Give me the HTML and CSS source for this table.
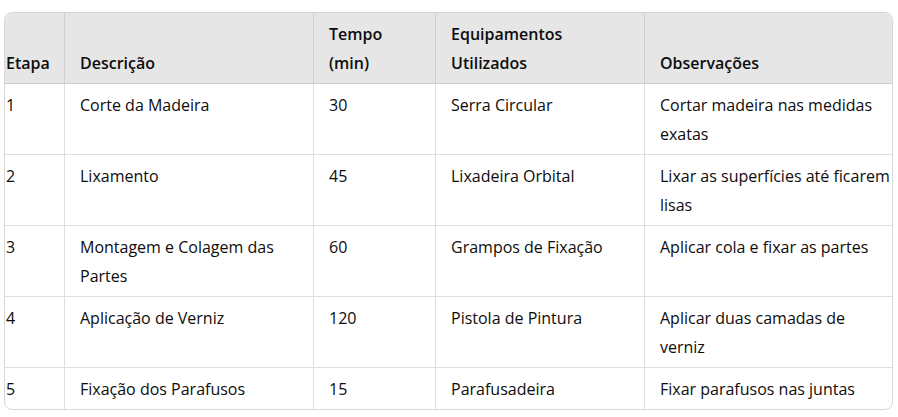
FILE: index.html
```html
<!DOCTYPE html>
<html lang="pt">
<head>
<meta charset="utf-8">
<link rel="stylesheet" href="styles.css">
</head>
<body>
<div class="wrap">
<table class="tbl">
<colgroup>
<col class="c1"><col class="c2"><col class="c3"><col class="c4"><col class="c5">
</colgroup>
<thead>
<tr><th>Etapa</th><th>Descrição</th><th>Tempo (min)</th><th>Equipamentos Utilizados</th><th>Observações</th></tr>
</thead>
<tbody>
<tr><td>1</td><td>Corte da Madeira</td><td>30</td><td>Serra Circular</td><td>Cortar madeira nas medidas exatas</td></tr>
<tr><td>2</td><td>Lixamento</td><td>45</td><td>Lixadeira Orbital</td><td>Lixar as superfícies até ficarem lisas</td></tr>
<tr><td>3</td><td>Montagem e Colagem das Partes</td><td>60</td><td>Grampos de Fixação</td><td>Aplicar cola e fixar as partes</td></tr>
<tr><td>4</td><td>Aplicação de Verniz</td><td>120</td><td>Pistola de Pintura</td><td>Aplicar duas camadas de verniz</td></tr>
<tr><td>5</td><td>Fixação dos Parafusos</td><td>15</td><td>Parafusadeira</td><td>Fixar parafusos nas juntas</td></tr>
</tbody>
</table>
</div>
</body>
</html>
```
FILE: styles.css
```css
html, body { margin: 0; padding: 0; background: #ffffff; }
body { padding: 12px 5px 0 4px; font-family: "Open Sans", "Noto Sans", sans-serif; color: #0d0d0d; }
.wrap {
  width: 889px;
  border: 1px solid #d6d6d6;
  border-radius: 8px;
  overflow: hidden;
  box-sizing: border-box;
}
.tbl {
  border-collapse: collapse;
  table-layout: fixed;
  width: 889px;
  font-size: 16px;
  line-height: 29px;
  margin: -1px 0 0 -1px;
}
.c1 { width: 60px; }
.c2 { width: 249px; }
.c3 { width: 122px; }
.c4 { width: 209px; }
.c5 { width: 249px; }
.tbl th, .tbl td {
  padding: 7px 15px 5px 15px;
  text-align: left;
  border: 1px solid #dedede;
  vertical-align: top;
}
.tbl th {
  background: #e6e6e6;
  font-weight: 600;
  vertical-align: bottom;
  border-bottom-color: #cccccc;
  border-right-color: #d0d0d0;
}
.tbl th:first-child, .tbl td:first-child { padding-left: 1px; }
.tbl th:last-child, .tbl td:last-child { padding-right: 0; }
.tbl tr > :last-child { border-right: none; }
.tbl tbody tr:last-child td { border-bottom: none; }
```
